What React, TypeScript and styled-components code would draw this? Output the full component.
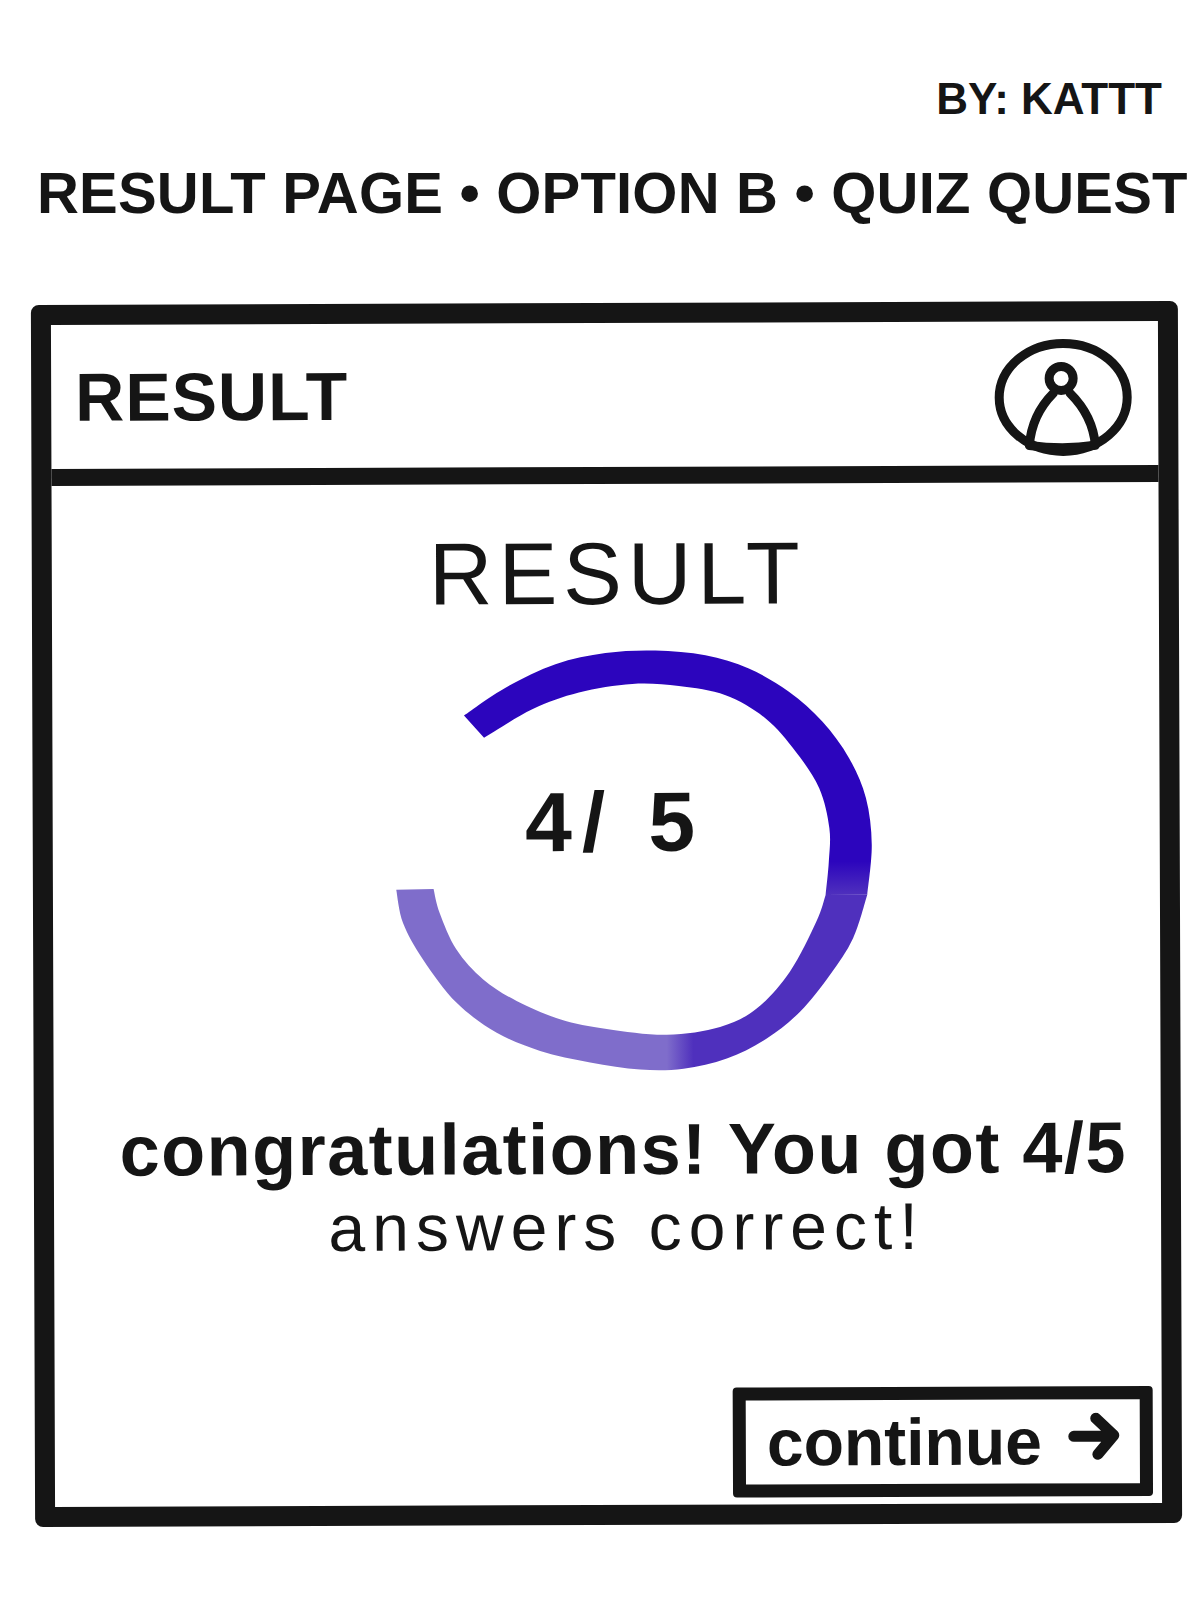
import styled, { createGlobalStyle } from 'styled-components';

const INK = '#151515';
const SKETCH_FONT = '"Liberation Sans", Arial, sans-serif';

const GlobalStyle = createGlobalStyle`
  html, body {
    margin: 0;
    padding: 0;
    background: #fff;
  }
`;

const Page = styled.div`
  width: 1200px;
  height: 1600px;
  overflow: hidden;
  padding: 70px 20px 0 33px;
  box-sizing: border-box;
  color: ${INK};
  font-family: ${SKETCH_FONT};
`;

const Author = styled.div`
  height: 58px;
  padding-right: 18px;
  text-align: right;
  font-size: 44px;
  line-height: 58px;
  font-weight: 700;
`;

const PageTitle = styled.h1`
  margin: 30px 0 0 4px;
  height: 70px;
  font-size: 58px;
  line-height: 70px;
  font-weight: 700;
  white-space: nowrap;
  letter-spacing: 0.2px;
`;

const Frame = styled.main`
  margin-top: 75px;
  height: 1222px;
  box-sizing: border-box;
  border: 20px solid ${INK};
  border-radius: 8px;
  display: flex;
  flex-direction: column;
  transform: rotate(-0.2deg);
`;

const TopBar = styled.header`
  flex: 0 0 161px;
  display: flex;
  align-items: center;
  justify-content: space-between;
  padding: 8px 25px 0 24px;
  box-sizing: border-box;
  border-bottom: 17px solid ${INK};
`;

const BarTitle = styled.div`
  font-size: 68px;
  font-weight: 700;
  line-height: 80px;
  letter-spacing: 1px;
  margin-top: -8px;
`;

const Content = styled.section`
  flex: 1;
  min-height: 0;
  display: flex;
  flex-direction: column;
  align-items: center;
  padding-top: 40px;
`;

const ResultTitle = styled.h2`
  margin: 0 0 0 24px;
  height: 100px;
  font-size: 88px;
  line-height: 100px;
  font-weight: 400;
  letter-spacing: 6px;
`;

const RingWrap = styled.div`
  position: relative;
  align-self: flex-start;
  margin: 15px 0 0 330px;
  width: 500px;
  height: 445px;
`;

const RingSvg = styled.svg`
  display: block;
`;

const Score = styled.div`
  position: absolute;
  left: 130px;
  top: 133px;
  width: 205px;
  text-align: center;
  white-space: pre;
  font-size: 84px;
  line-height: 100px;
  font-weight: 700;
  letter-spacing: 10px;
`;

const Message = styled.p`
  margin: 23px 0 0 32px;
  font-size: 72px;
  line-height: 84px;
  font-weight: 700;
  white-space: nowrap;
  letter-spacing: 1.5px;
`;

const SubMessage = styled.p`
  margin: 0 0 0 38px;
  font-size: 66px;
  line-height: 72px;
  white-space: nowrap;
  letter-spacing: 7px;
`;

const ContinueButton = styled.button`
  margin: auto 9px 7px auto;
  width: 420px;
  height: 110px;
  box-sizing: border-box;
  border: 13px solid ${INK};
  border-radius: 4px;
  background: #fff;
  color: ${INK};
  display: flex;
  align-items: center;
  justify-content: space-between;
  padding: 0 20px 0 21px;
  font-family: ${SKETCH_FONT};
  font-size: 66px;
  font-weight: 700;
  line-height: 70px;
`;

const ArrowSvg = styled.svg`
  margin-bottom: 10px;
`;

type Point = [number, number];

// edges of the hand drawn ring, traced in a 3x crop (the viewBox brings it back to size)
const DARK_OUTER: Point[] = [
  [275, 258], [400, 175], [550, 105], [700, 72], [850, 65], [1000, 80], [1130, 120], [1250, 190],
  [1350, 280], [1430, 390], [1480, 510], [1497, 650], [1483, 800],
];
const DARK_INNER: Point[] = [
  [1358, 800], [1368, 700], [1370, 600], [1340, 480], [1270, 370], [1180, 270], [1060, 200],
  [920, 172], [780, 165], [620, 190], [480, 240], [335, 325],
];
const LIGHT_OUTER: Point[] = [
  [1483, 800], [1440, 930], [1370, 1040], [1280, 1150], [1180, 1230], [1060, 1290], [930, 1320],
  [800, 1322], [650, 1300], [500, 1265], [370, 1210], [250, 1120], [150, 990], [90, 880], [70, 780],
];
const LIGHT_INNER: Point[] = [
  [182, 778], [200, 850], [250, 960], [330, 1050], [430, 1115], [560, 1170], [700, 1200],
  [880, 1218], [1040, 1195], [1150, 1140], [1250, 1030], [1330, 880], [1358, 800],
];

function curve(points: Point[]) {
  let d = '';
  for (let i = 0; i < points.length - 1; i++) {
    const p0 = points[Math.max(i - 1, 0)];
    const p1 = points[i];
    const p2 = points[i + 1];
    const p3 = points[Math.min(i + 2, points.length - 1)];
    d += ` C${p1[0] + (p2[0] - p0[0]) / 6} ${p1[1] + (p2[1] - p0[1]) / 6} ${p2[0] - (p3[0] - p1[0]) / 6} ${p2[1] - (p3[1] - p1[1]) / 6} ${p2[0]} ${p2[1]}`;
  }
  return d;
}

function band(outer: Point[], inner: Point[]) {
  return `M${outer[0][0]} ${outer[0][1]}${curve(outer)} L${inner[0][0]} ${inner[0][1]}${curve(inner)} Z`;
}

function ProgressRing() {
  return (
    <RingSvg width="500" height="445" viewBox="30 30 1500 1335" aria-hidden="true">
      <defs>
        <linearGradient id="ringDark" gradientUnits="userSpaceOnUse" x1="0" y1="700" x2="0" y2="800">
          <stop offset="0" stopColor="#2c05bd" />
          <stop offset="1" stopColor="#4f30bd" />
        </linearGradient>
        <linearGradient id="ringLight" gradientUnits="userSpaceOnUse" x1="960" y1="0" x2="880" y2="0">
          <stop offset="0" stopColor="#4f30bd" />
          <stop offset="1" stopColor="#7f6dcb" />
        </linearGradient>
      </defs>
      <path d={band(DARK_OUTER, DARK_INNER)} fill="url(#ringDark)" />
      <path d={band(LIGHT_OUTER, LIGHT_INNER)} fill="url(#ringLight)" />
    </RingSvg>
  );
}

function AvatarIcon() {
  return (
    <svg width="140" height="120" viewBox="0 0 140 120" fill="none" stroke={INK} strokeWidth="9" strokeLinecap="round" aria-hidden="true">
      <ellipse cx="70" cy="60" rx="64" ry="54" />
      <circle cx="68" cy="41" r="12" />
      <path d="M60 56 C48 68 38 84 36 108 M77 56 C89 68 100 84 102 108 M36 108 C58 111 82 111 102 108" />
    </svg>
  );
}

function ArrowIcon() {
  return (
    <ArrowSvg width="52" height="48" viewBox="0 0 52 48" fill="none" stroke={INK} strokeWidth="11" strokeLinecap="round" strokeLinejoin="round" aria-hidden="true">
      <path d="M6 24 H45 M28 6 L46 23 L30 42" />
    </ArrowSvg>
  );
}

export default function App() {
  return (
    <>
      <GlobalStyle />
      <Page>
        <Author>BY: KATTT</Author>
        <PageTitle>RESULT PAGE • OPTION B • QUIZ QUEST</PageTitle>
        <Frame>
          <TopBar>
            <BarTitle>RESULT</BarTitle>
            <AvatarIcon />
          </TopBar>
          <Content>
            <ResultTitle>RESULT</ResultTitle>
            <RingWrap>
              <ProgressRing />
              <Score>4/ 5</Score>
            </RingWrap>
            <Message>congratulations! You got 4/5</Message>
            <SubMessage>answers correct!</SubMessage>
            <ContinueButton type="button">
              continue
              <ArrowIcon />
            </ContinueButton>
          </Content>
        </Frame>
      </Page>
    </>
  );
}
